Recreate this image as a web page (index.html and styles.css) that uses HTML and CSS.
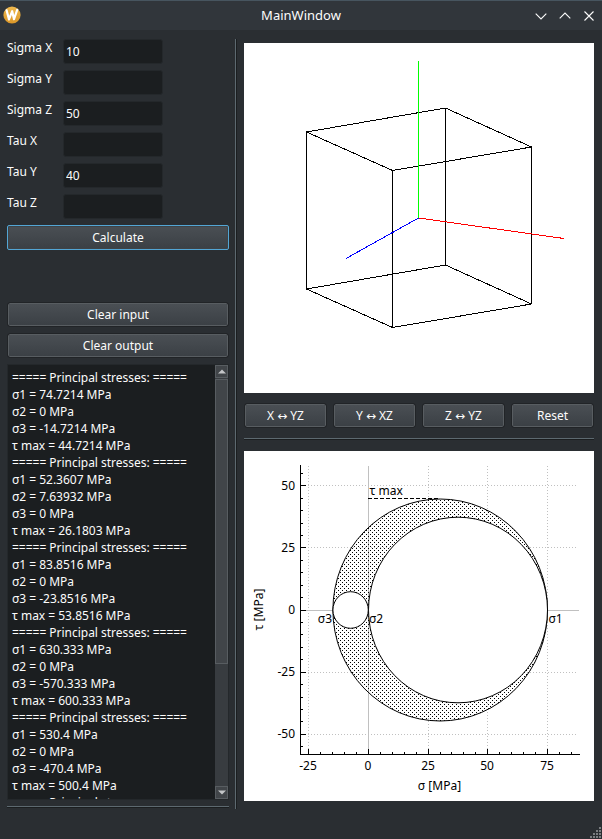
FILE: index.html
```html
<!DOCTYPE html>
<html lang="en">
<head>
<meta charset="utf-8">
<title>MainWindow</title>
<link rel="stylesheet" href="styles.css">
</head>
<body>
<div class="window">
  <header class="titlebar">
    <svg class="logo" width="18" height="18" viewBox="0 0 18 18">
      <defs><linearGradient id="gold" x1="0" y1="0" x2="0" y2="1"><stop offset="0" stop-color="#efb94e"/><stop offset="1" stop-color="#dc9829"/></linearGradient></defs>
      <circle cx="9" cy="9" r="8.6" fill="url(#gold)"/>
      <path d="M3.6 4.2 L6 13.4 L9.2 5.2 L11 13.2 L14.2 3.8" fill="none" stroke="#fff" stroke-width="2.2" stroke-linejoin="round" stroke-linecap="round"/>
    </svg>
    <h1 class="title">MainWindow</h1>
    <div class="controls">
      <svg width="12" height="12" viewBox="0 0 12 12"><path d="M.7 3.7 L6 9 L11.3 3.7"/></svg>
      <svg width="12" height="12" viewBox="0 0 12 12"><path d="M.7 8.3 L6 3 L11.3 8.3"/></svg>
      <svg width="12" height="12" viewBox="0 0 12 12"><path d="M1.5 1.5 L10.5 10.5 M10.5 1.5 L1.5 10.5"/></svg>
    </div>
  </header>
  <main class="content">
    <section class="left">
      <div class="form">
        <label for="sx">Sigma X</label><input id="sx" value="10">
        <label for="sy">Sigma Y</label><input id="sy">
        <label for="sz">Sigma Z</label><input id="sz" value="50">
        <label for="tx">Tau X</label><input id="tx">
        <label for="ty">Tau Y</label><input id="ty" value="40">
        <label for="tz">Tau Z</label><input id="tz">
      </div>
      <button class="btn focused">Calculate</button>
      <div class="spacer"></div>
      <button class="btn">Clear input</button>
      <button class="btn">Clear output</button>
      <div class="output">
        <pre class="log">===== Principal stresses: =====
σ1 = 74.7214 MPa
σ2 = 0 MPa
σ3 = -14.7214 MPa
τ max = 44.7214 MPa
===== Principal stresses: =====
σ1 = 52.3607 MPa
σ2 = 7.63932 MPa
σ3 = 0 MPa
τ max = 26.1803 MPa
===== Principal stresses: =====
σ1 = 83.8516 MPa
σ2 = 0 MPa
σ3 = -23.8516 MPa
τ max = 53.8516 MPa
===== Principal stresses: =====
σ1 = 630.333 MPa
σ2 = 0 MPa
σ3 = -570.333 MPa
τ max = 600.333 MPa
===== Principal stresses: =====
σ1 = 530.4 MPa
σ2 = 0 MPa
σ3 = -470.4 MPa
τ max = 500.4 MPa
===== Principal stresses: =====</pre>
        <div class="scrollbar">
          <span class="arrow"><svg width="8" height="5" viewBox="0 0 8 5"><path d="M0 4.5 L4 .5 L8 4.5 Z"/></svg></span>
          <span class="thumb"></span>
          <span class="track"></span>
          <span class="arrow"><svg width="8" height="5" viewBox="0 0 8 5"><path d="M0 .5 L4 4.5 L8 .5 Z"/></svg></span>
        </div>
      </div>
      <div class="hline"></div>
    </section>
    <div class="vline"></div>
    <section class="right">
      <svg class="canvas" width="350" height="350" viewBox="244 43 350 350" shape-rendering="crispEdges" fill="none" stroke="#000" stroke-linejoin="bevel">
        <path d="M306.5 132 L445.5 108 L531.5 147 L392.5 170.5 Z M306.5 289 L445.5 265 L531.5 304 L392.5 327.5 Z M306.5 132 V289 M445.5 108 V265 M531.5 147 V304 M392.5 170.5 V327.5"/>
        <path d="M418.5 218 L564 238.5" stroke="#f00"/>
        <path d="M418.5 218.5 V61" stroke="#0f0"/>
        <path d="M418.5 218 L346 258.5" stroke="#00f"/>
      </svg>
      <div class="views">
        <button class="btn">X ↔ YZ</button>
        <button class="btn">Y ↔ XZ</button>
        <button class="btn">Z ↔ YZ</button>
        <button class="btn">Reset</button>
      </div>
      <div class="hline"></div>
      <svg class="canvas plot" width="350" height="350" viewBox="244 451 350 350">
        <defs>
          <pattern id="dense" width="4" height="4" patternUnits="userSpaceOnUse" x="0" y="0">
            <rect x="0" y="0" width="1" height="1"/><rect x="2" y="2" width="1" height="1"/>
          </pattern>
        </defs>
        <g class="grid">
          <path d="M308.5 466 V754 M428.5 466 V754 M487.5 466 V754 M547.5 466 V754 M302 485.5 H578 M302 547.5 H578 M302 672.5 H578 M302 734.5 H578"/>
        </g>
        <path class="zero" d="M368.5 466 V754 M301 610.5 H579"/>
        <g class="circles">
          <ellipse class="base" cx="440.2" cy="610" rx="107.3" ry="111"/>
          <path class="zero" d="M368.5 530 V690"/>
          <path class="zero" d="M368.5 525 V695"/>
          <ellipse cx="440.2" cy="610" rx="107.3" ry="111" fill="url(#dense)"/>
          <ellipse cx="458" cy="610" rx="89.5" ry="92.8" fill="#fff"/>
          <ellipse cx="350.6" cy="610" rx="17.7" ry="18.3" fill="#fff"/>
        </g>
        <path class="dash" d="M368 498.5 H440"/>
        <path class="axis" d="M300.5 465 V755 M300 754.5 H580
          M301 485.5 h5 M301 547.5 h5 M301 610.5 h5 M301 672.5 h5 M301 734.5 h5
          M301 473.5 h2 M301 498.5 h2 M301 510.5 h2 M301 523.5 h2 M301 535.5 h2 M301 560.5 h2 M301 572.5 h2 M301 585.5 h2 M301 597.5 h2 M301 622.5 h2 M301 634.5 h2 M301 647.5 h2 M301 659.5 h2 M301 684.5 h2 M301 697.5 h2 M301 709.5 h2 M301 721.5 h2 M301 746.5 h2
          M308.5 754 v-5 M368.5 754 v-5 M428.5 754 v-5 M487.5 754 v-5 M547.5 754 v-5
          M320.5 754 v-2 M332.5 754 v-2 M344.5 754 v-2 M356.5 754 v-2 M380.5 754 v-2 M392.5 754 v-2 M404.5 754 v-2 M416.5 754 v-2 M440.5 754 v-2 M451.5 754 v-2 M463.5 754 v-2 M475.5 754 v-2 M499.5 754 v-2 M511.5 754 v-2 M523.5 754 v-2 M535.5 754 v-2 M559.5 754 v-2 M571.5 754 v-2"/>
        <g class="end">
          <text x="295" y="490">50</text><text x="295" y="552">25</text><text x="295" y="614">0</text><text x="295" y="676">-25</text><text x="295" y="738">-50</text>
          <text x="332" y="623">σ3</text>
        </g>
        <g class="mid">
          <text x="308" y="770">-25</text><text x="368" y="770">0</text><text x="428" y="770">25</text><text x="487" y="770">50</text><text x="547" y="770">75</text>
          <text x="439.5" y="790">σ [MPa]</text>
          <text transform="translate(263 609.5) rotate(-90)">τ [MPa]</text>
        </g>
        <text x="369.5" y="495">τ max</text>
        <text x="369" y="623">σ2</text>
        <text x="548.5" y="623">σ1</text>
      </svg>
    </section>
  </main>
  <svg class="grip" width="12" height="12" viewBox="0 0 12 12" shape-rendering="crispEdges"><path d="M9 0h2v2h-2z M6 3h2v2h-2z M9 3h2v2h-2z M3 6h2v2h-2z M6 6h2v2h-2z M9 6h2v2h-2z M0 9h2v2h-2z M3 9h2v2h-2z M6 9h2v2h-2z M9 9h2v2h-2z"/></svg>
</div>
</body>
</html>
```
FILE: styles.css
```css
* { box-sizing: border-box; }
body {
  margin: 0;
  background: #2a2e32;
  color: #fcfcfc;
  font: 12px/17px "Noto Sans", "DejaVu Sans", sans-serif;
}
.window { position: relative; width: 602px; height: 839px; overflow: hidden; }
.titlebar {
  display: grid;
  grid-template-columns: 80px 1fr 80px;
  align-items: center;
  height: 30px;
  background: #31363b;
  border-top: 1px solid #47555f;
}
.logo { margin-left: 3px; margin-top: -1px; }
.title { margin: 0; font-size: 13px; font-weight: 400; text-align: center; }
.controls { display: flex; gap: 12px; justify-content: flex-end; padding-right: 7px; }
.controls svg { fill: none; stroke: #fcfcfc; stroke-width: 1.1; }
.content { display: flex; padding: 9px 8px 0 7px; }
.left { width: 222px; height: 769px; display: flex; flex-direction: column; gap: 6px; }
.form { display: grid; grid-template-columns: 50px 100px; column-gap: 6px; row-gap: 6px; grid-auto-rows: 25px; white-space: nowrap; }
.form input {
  width: 100px; height: 25px; margin: 0; padding: 0 2px;
  background: #1b1e20; border: 1px solid #24282b; border-radius: 3px;
  color: inherit; font: inherit; outline: none;
}
.btn {
  height: 25px; margin: 0; padding: 0; flex: none;
  color: inherit; font: inherit;
  background: linear-gradient(#4a4f54, #3b4045) padding-box;
  border: 1px solid #585d61; border-radius: 2px;
  outline: 1px solid #212427; outline-offset: 0;
}
.left .btn:not(.focused) { height: 23px; margin: 1px; }
.btn.focused { border-color: #53a6d5; outline: none; box-shadow: inset 0 0 0 1px #3e4347; }
.spacer { height: 40px; flex: none; }
.output { display: flex; flex: none; height: 436px; background: #1b1e20; border: 1px solid #24282b; overflow: hidden; }
.log { flex: 1; margin: 0; padding: 4px 0 0 4px; font: inherit; letter-spacing: -0.02px; height: 434px; overflow: hidden; }
.scrollbar { width: 13px; display: flex; flex-direction: column; background: #383c40; }
.arrow, .thumb { border: 1px solid #585d61; background: #414549; }
.arrow { height: 13px; display: flex; align-items: center; justify-content: center; }
.arrow svg { fill: #c4c6c8; }
.thumb { height: 285px; margin-top: 1px; }
.track { flex: 1; }
.hline { height: 3px; flex: none; background: linear-gradient(#5d6970 0 1px, #1b1e20 1px 2px, transparent 2px); }
.vline { width: 3px; height: 770px; margin: 0 6px; background: linear-gradient(90deg, #5d6970 0 1px, #1b1e20 1px 2px, transparent 2px); }
.right { width: 350px; padding-top: 4px; display: flex; flex-direction: column; }
.canvas { display: block; background: #fff; flex: none; }
.views { display: grid; grid-template-columns: repeat(4, 81px); justify-content: space-between; padding: 11px 1px; }
.views .btn { height: 23px; }
.right .hline { margin: 0 0 10px; }
.plot text { fill: #000; font: 12px "Noto Sans", sans-serif; }
.plot .end { text-anchor: end; }
.plot .mid { text-anchor: middle; }
.grid path { fill: none; stroke: #c0c0c0; stroke-dasharray: 1 2; }
.zero { fill: none; stroke: #c0c0c0; }
.circles ellipse { stroke: #000; stroke-width: 1; }
.circles .base { fill: #fff; fill-opacity: 0; stroke: none; }
.dash { fill: none; stroke: #000; stroke-dasharray: 4 2; }
.axis { fill: none; stroke: #000; shape-rendering: crispEdges; }
.grip { position: absolute; right: 0; bottom: 0; fill: #7a7d80; }
```
